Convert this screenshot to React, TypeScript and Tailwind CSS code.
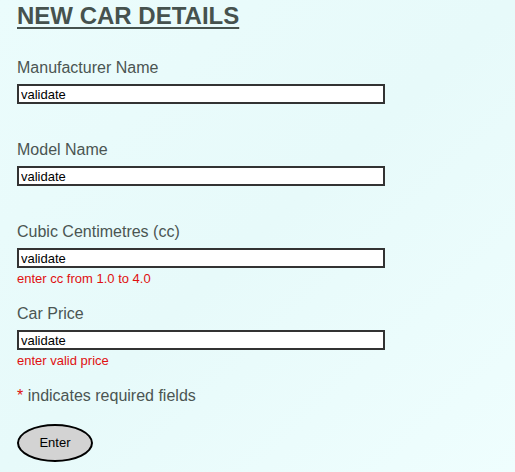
import React from "react";

const font = { fontFamily: '"Liberation Sans", Arial, sans-serif' };

function Field({ label, error }: { label: string; error?: string }) {
  return (
    <div className="flex flex-col">
      <label className="block text-[16px] leading-[18px] text-[#4b5552]">{label}</label>
      <input
        readOnly
        defaultValue="validate"
        className="mt-[7px] h-[20px] w-[368px] border-2 border-[#333] bg-white px-[2px] text-[13px] leading-[16px] text-black outline-none"
        style={font}
      />
      <div className="h-[37px] pt-[3px]">
        {error && <div className="text-[13px] leading-[15px] text-[#e01010]">{error}</div>}
      </div>
    </div>
  );
}

export default function App() {
  return (
    <div
      className="min-h-[472px] w-full bg-gradient-to-br from-[#ebfcfc] via-[#e7fafa] to-[#effefe] pl-[17px] pt-[2px]"
      style={font}
    >
      <h1 className="text-[24px] font-bold leading-[28px] text-[#46524e] underline decoration-2 underline-offset-[3px]">
        NEW CAR DETAILS
      </h1>
      <div className="mt-[29px] flex flex-col">
        <Field label="Manufacturer Name" />
        <Field label="Model Name" />
        <Field label="Cubic Centimetres (cc)" error="enter cc from 1.0 to 4.0" />
        <Field label="Car Price" error="enter valid price" />
      </div>
      <p className="mt-[0px] text-[16px] leading-[18px] text-[#4b5552]">
        <span className="text-[#e01010]">*</span> indicates required fields
      </p>
      <button className="mt-[19px] flex h-[38px] w-[76px] items-center justify-center rounded-[50%] border-2 border-black bg-[#d3d3d3] text-[13px] text-black">
        Enter
      </button>
    </div>
  );
}
